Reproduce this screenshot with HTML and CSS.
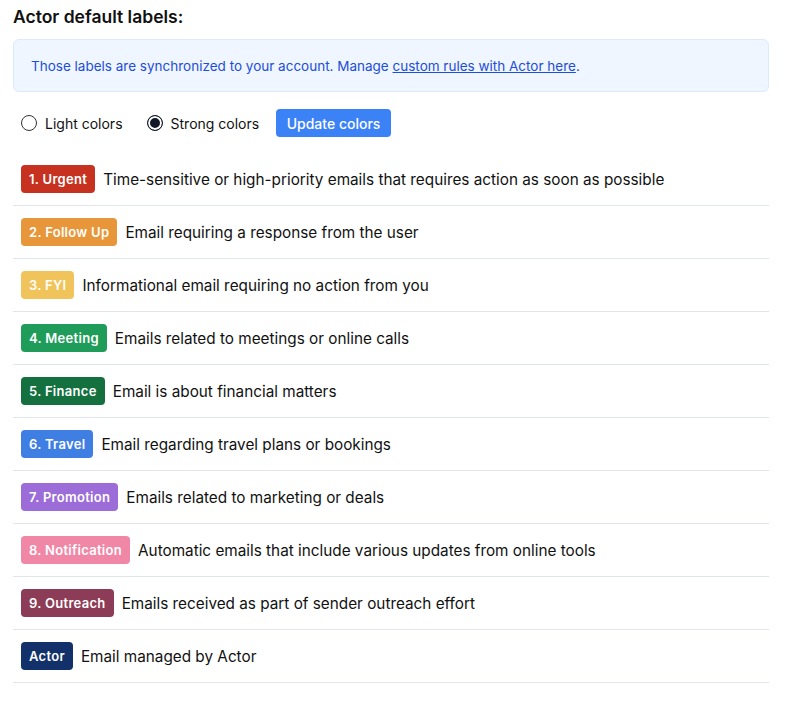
FILE: index.html
```html
<!DOCTYPE html>
<html>
<head>
<meta charset="utf-8">
<link rel="stylesheet" href="styles.css">
</head>
<body>
<div class="page">
  <h2 class="title">Actor default labels:</h2>
  <div class="alert">Those labels are synchronized to your account. Manage <a href="#">custom rules with Actor here</a>.</div>
  <div class="controls">
    <label class="radio"><span class="dot"></span>Light colors</label>
    <label class="radio"><span class="dot checked"></span>Strong colors</label>
    <button class="btn">Update colors</button>
  </div>
  <ul class="labels">
    <li class="row"><span class="badge c1">1. Urgent</span><span class="desc">Time-sensitive or high-priority emails that requires action as soon as possible</span></li>
    <li class="row"><span class="badge c2">2. Follow Up</span><span class="desc">Email requiring a response from the user</span></li>
    <li class="row"><span class="badge c3">3. FYI</span><span class="desc">Informational email requiring no action from you</span></li>
    <li class="row"><span class="badge c4">4. Meeting</span><span class="desc">Emails related to meetings or online calls</span></li>
    <li class="row"><span class="badge c5">5. Finance</span><span class="desc">Email is about financial matters</span></li>
    <li class="row"><span class="badge c6">6. Travel</span><span class="desc">Email regarding travel plans or bookings</span></li>
    <li class="row"><span class="badge c7">7. Promotion</span><span class="desc">Emails related to marketing or deals</span></li>
    <li class="row"><span class="badge c8">8. Notification</span><span class="desc">Automatic emails that include various updates from online tools</span></li>
    <li class="row"><span class="badge c9">9. Outreach</span><span class="desc">Emails received as part of sender outreach effort</span></li>
    <li class="row"><span class="badge c10">Actor</span><span class="desc">Email managed by Actor</span></li>
  </ul>
</div>
</body>
</html>
```
FILE: styles.css
```css
* { box-sizing: border-box; }
body {
  margin: 0;
  font-family: Inter, "Noto Sans", sans-serif;
  color: #111827;
  background: #fff;
}
.page {
  padding: 4px 18px 0 13px;
}
.title {
  margin: 0 0 9px 0;
  font-size: 17.5px;
  line-height: 26px;
  font-weight: 600;
  color: #111;
}
.alert {
  background: #eff6ff;
  border: 1px solid #dbeafe;
  border-radius: 6px;
  padding: 17px 17px 15px;
  font-size: 13.5px;
  line-height: 19px;
  color: #1d4ed8;
}
.alert a {
  color: #1d4ed8;
  text-decoration: underline;
}
.controls {
  display: flex;
  align-items: center;
  margin-top: 17px;
  padding-left: 8px;
  height: 28px;
}
.radio {
  display: flex;
  align-items: center;
  gap: 8px;
  font-size: 14px;
  color: #111;
  margin-right: 24px;
}
.radio + .radio { margin-right: 17px; }
.dot {
  width: 16px;
  height: 16px;
  border-radius: 50%;
  border: 1px solid #333;
  background: #fff;
}
.dot.checked {
  background: #111827;
  box-shadow: inset 0 0 0 2px #fff;
  border-color: #111827;
  border-width: 1.5px;
}
.btn {
  height: 28px;
  padding: 0 10.5px;
  border: none;
  border-radius: 4px;
  background: #3b82f6;
  color: #fff;
  font-family: inherit;
  font-size: 14px;
  font-weight: 500;
}
.labels {
  list-style: none;
  margin: 16px 0 0 0;
  padding: 0;
}
.row {
  display: flex;
  align-items: center;
  gap: 8px;
  padding: 12px 8px;
  border-bottom: 1px solid #e1e5ee;
}
.badge {
  height: 28px;
  line-height: 28px;
  padding: 0 8px;
  border-radius: 4px;
  color: #fff;
  font-size: 13px;
  font-weight: 600;
  letter-spacing: 0.3px;
}
.desc {
  font-size: 15.3px;
  color: #111;
}
.c1 { background: #c6321f; }
.c2 { background: #e8963a; }
.c3 { background: #f1c45b; }
.c4 { background: #1f9c5a; }
.c5 { background: #14703f; }
.c6 { background: #3f7ee2; }
.c7 { background: #9c6cd8; }
.c8 { background: #f087a7; }
.c9 { background: #8c3c56; }
.c10 { background: #12306a; }
```
